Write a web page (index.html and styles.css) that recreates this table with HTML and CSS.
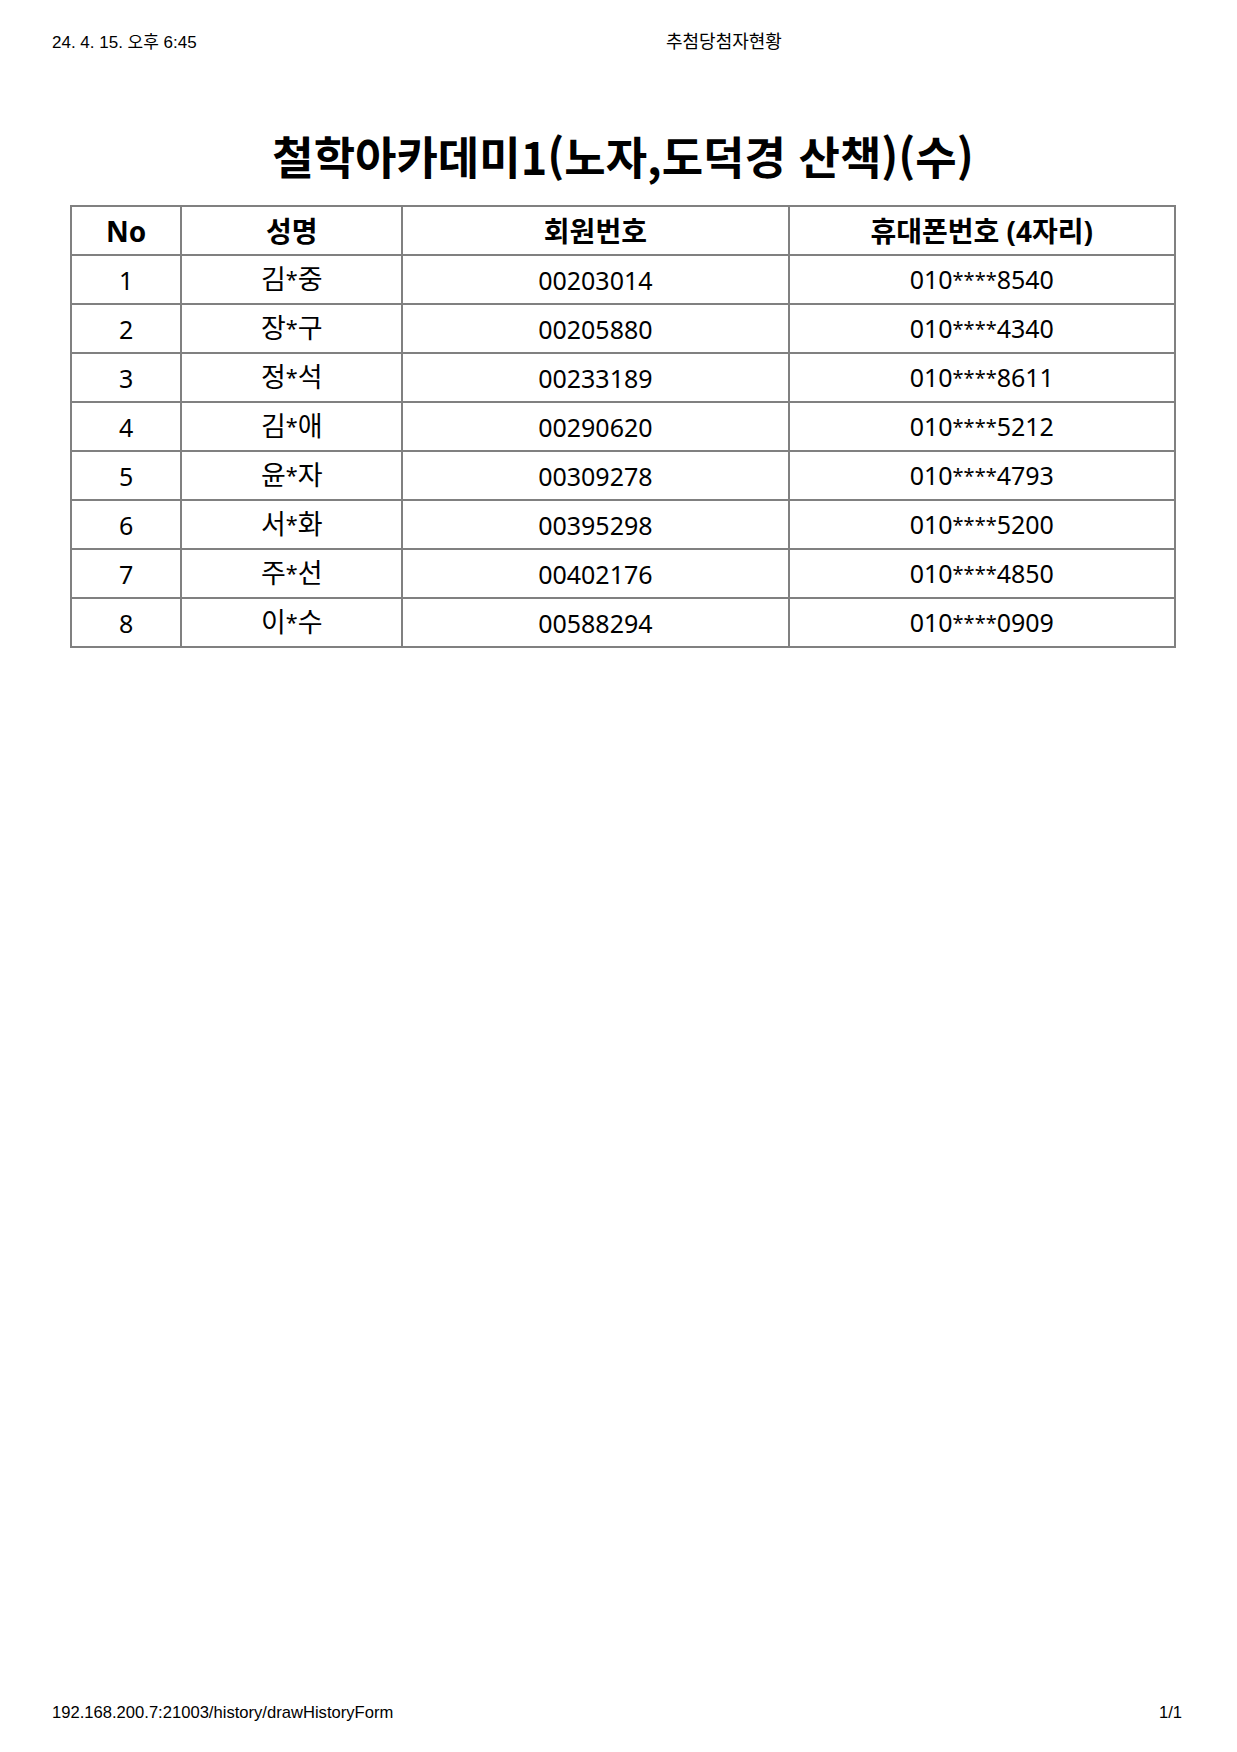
FILE: index.html
```html
<!DOCTYPE html>
<html lang="ko">
<head>
<meta charset="utf-8">
<title>추첨당첨자현황</title>
<link rel="stylesheet" href="styles.css">
</head>
<body>
<div class="page">
  <header class="print-header">
    <span class="print-date">24. 4. 15. 오후 6:45</span>
    <span class="print-title">추첨당첨자현황</span>
  </header>
  <main class="content">
    <h1 class="title">철학아카데미1(노자,도덕경 산책)(수)</h1>
    <table class="winners">
      <colgroup>
        <col class="c-no">
        <col class="c-name">
        <col class="c-member">
        <col class="c-phone">
      </colgroup>
      <thead>
        <tr><th>No</th><th>성명</th><th>회원번호</th><th>휴대폰번호 (4자리)</th></tr>
      </thead>
      <tbody>
        <tr><td>1</td><td class="name">김<span class="mask">*</span>중</td><td>00203014</td><td>010<span class="mask">****</span>8540</td></tr>
        <tr><td>2</td><td class="name">장<span class="mask">*</span>구</td><td>00205880</td><td>010<span class="mask">****</span>4340</td></tr>
        <tr><td>3</td><td class="name">정<span class="mask">*</span>석</td><td>00233189</td><td>010<span class="mask">****</span>8611</td></tr>
        <tr><td>4</td><td class="name">김<span class="mask">*</span>애</td><td>00290620</td><td>010<span class="mask">****</span>5212</td></tr>
        <tr><td>5</td><td class="name">윤<span class="mask">*</span>자</td><td>00309278</td><td>010<span class="mask">****</span>4793</td></tr>
        <tr><td>6</td><td class="name">서<span class="mask">*</span>화</td><td>00395298</td><td>010<span class="mask">****</span>5200</td></tr>
        <tr><td>7</td><td class="name">주<span class="mask">*</span>선</td><td>00402176</td><td>010<span class="mask">****</span>4850</td></tr>
        <tr><td>8</td><td class="name">이<span class="mask">*</span>수</td><td>00588294</td><td>010<span class="mask">****</span>0909</td></tr>
      </tbody>
    </table>
  </main>
  <footer class="print-footer">
    <span>192.168.200.7:21003/history/drawHistoryForm</span>
    <span>1/1</span>
  </footer>
</div>
</body>
</html>
```

FILE: styles.css
```css
html, body {
  margin: 0;
  padding: 0;
  background: #ffffff;
}

.page {
  width: 1237px;
  min-height: 1752px;
  display: flex;
  flex-direction: column;
  color: #000000;
  font-family: "Noto Sans", "Noto Sans CJK KR", sans-serif;
}

.print-header,
.print-footer {
  display: flex;
  align-items: baseline;
  font-family: "Liberation Sans", "Noto Sans CJK KR", sans-serif;
  font-size: 17px;
  line-height: 18px;
  color: #000000;
}

.print-header {
  padding: 33px 0 0 52px;
}

.print-date {
  width: 614px;
}

.print-title {
  font-size: 18px;
}

.print-footer {
  margin-top: auto;
  justify-content: space-between;
  padding: 0 55px 30px 52px;
  font-size: 16.6px;
}

.content {
  padding: 0 0 0 70px;
}

.title {
  margin: 0;
  padding: 74px 0 0 0;
  width: 1106px;
  text-align: center;
  font-family: "Noto Sans CJK KR", "Noto Sans", sans-serif;
  font-size: 45px;
  line-height: 60px;
  font-weight: 700;
}

.winners {
  margin-top: 19px;
  width: 1106px;
  border-collapse: collapse;
  table-layout: fixed;
  border: 2px solid #808080;
}

.c-no { width: 10%; }
.c-name { width: 20%; }
.c-member { width: 35%; }
.c-phone { width: 35%; }

.winners th,
.winners td {
  border: 2px solid #808080;
  height: 47px;
  padding: 0;
  text-align: center;
  vertical-align: middle;
  font-size: 25px;
  line-height: 30px;
}

.winners th {
  font-size: 28px;
  font-weight: 700;
}

.winners td {
  font-weight: 400;
}

.winners td.name {
  font-size: 27px;
}

.mask {
  font-size: 0.8em;
  vertical-align: 0.08em;
}
```
